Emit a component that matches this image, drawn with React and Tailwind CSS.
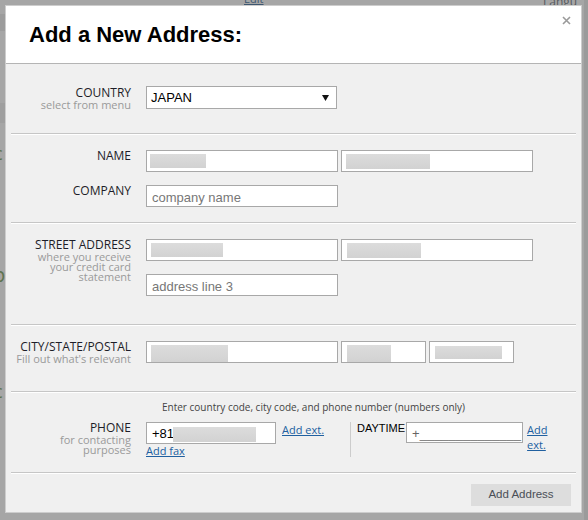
import React from "react";

const sans = "font-['Open_Sans',sans-serif]";
const arial = "font-['Liberation_Sans',Arial,sans-serif]";

function Blur({ className }) {
  return <span className={`block bg-gradient-to-b from-[#dcdcdc] to-[#d2d2d2] ${className}`} />;
}

function Field({ className = "", children }) {
  return (
    <div className={`h-[22px] bg-white border border-[#a8a8a8] flex items-center overflow-hidden ${arial} text-[13px] ${className}`}>
      {children}
    </div>
  );
}

function Label({ title, sub, nudge = "-mt-[1px]" }) {
  return (
    <div className={`w-[125px] shrink-0 text-right ${sans} ${nudge}`}>
      <div className="text-[12px] leading-[14px] text-[#1d1d28]">{title}</div>
      {sub && <div className="text-[11px] leading-[10px] text-[#9a9a9a]">{sub}</div>}
    </div>
  );
}

function Sep() {
  return <div className="mx-[5px] border-t border-[#c6c6c6] border-b border-b-white" />;
}

export default function App() {
  return (
    <div className="relative w-[588px] h-[520px] bg-[#a6a6a6] overflow-hidden">
      {/* page behind the overlay */}
      <span className={`absolute left-[244px] top-[-9px] text-[11px] underline text-[#3d5670] ${sans}`}>Edit</span>
      <span className={`absolute left-[543px] top-[-7px] text-[12px] text-[#55595e] ${sans}`}>Langu</span>
      <div className="absolute left-0 top-[14px] w-[5px] h-[17px] bg-[#9c9c9c]" />
      <div className="absolute left-0 top-[103px] w-[5px] h-[20px] bg-[#9f9f9f]" />
      <span className={`absolute left-[-6px] top-[140px] text-[18px] text-[#5f7450] ${sans}`}>c</span>
      <span className={`absolute left-[-7px] top-[260px] text-[20px] text-[#5f7450] ${sans}`}>p</span>
      <span className={`absolute left-[-6px] top-[378px] text-[18px] text-[#5f7450] ${sans}`}>c</span>
      <div className="absolute right-0 top-0 w-[4px] h-full bg-[#9b9b9b]" />

      <div className="p-[5px]">
        <div className="relative w-[577px] h-[508px] border border-[#cdcdcd] bg-[#f0f0f0] flex flex-col">
          {/* header */}
          <div className="h-[58px] shrink-0 bg-white border-b border-[#b4b4b4] flex items-center pl-[23px]">
            <h1 className={`${arial} text-[22px] font-bold text-black`}>Add a New Address:</h1>
          </div>
          <svg className="absolute right-[10px] top-[10px]" width="9" height="9" viewBox="0 0 9 9">
            <path d="M1 1L8 8M8 1L1 8" stroke="#9a9a9a" strokeWidth="1.6" />
          </svg>

          {/* country */}
          <div className="h-[69px] shrink-0 flex items-start pt-[22px]">
            <Label title="COUNTRY" sub="select from menu" nudge="mt-0" />
            <div className={`ml-[15px] w-[191px] h-[23px] bg-white border border-[#a8a8a8] flex items-center justify-between pl-[4px] pr-[7px] pt-[1px] ${arial} text-[13px] text-black`}>
              <span>JAPAN</span>
              <svg width="7" height="6" viewBox="0 0 7 6">
                <path d="M0 0H7L3.5 6Z" fill="#111" />
              </svg>
            </div>
          </div>
          <Sep />

          {/* name / company */}
          <div className="h-[87px] shrink-0 pt-[15px] flex flex-col gap-[13px]">
            <div className="flex items-start">
              <Label title="NAME" />
              <div className="ml-[15px] flex gap-[3px]">
                <Field className="w-[192px] pl-[3px]">
                  <Blur className="w-[56px] h-[14px]" />
                </Field>
                <Field className="w-[192px] pl-[4px]">
                  <Blur className="w-[84px] h-[15px]" />
                </Field>
              </div>
            </div>
            <div className="flex items-start">
              <Label title="COMPANY" />
              <Field className="ml-[15px] w-[192px] pl-[5px] pt-[3px] text-[13.5px] text-[#777]">company name</Field>
            </div>
          </div>
          <Sep />

          {/* street */}
          <div className="h-[100px] shrink-0 flex items-start pt-[15px]">
            <Label
              title="STREET ADDRESS"
              sub={
                <>
                  where you receive
                  <br />
                  your credit card
                  <br />
                  statement
                </>
              }
            />
            <div className="ml-[15px] flex flex-col gap-[13px]">
              <div className="flex gap-[3px]">
                <Field className="w-[192px] pl-[4px]">
                  <Blur className="w-[72px] h-[14px]" />
                </Field>
                <Field className="w-[192px] pl-[5px]">
                  <Blur className="w-[74px] h-[15px]" />
                </Field>
              </div>
              <Field className="w-[192px] pl-[5px] pt-[3px] text-[13.5px] text-[#777]">address line 3</Field>
            </div>
          </div>
          <Sep />

          {/* city */}
          <div className="h-[65px] shrink-0 flex items-start pt-[15px]">
            <Label title="CITY/STATE/POSTAL" sub="Fill out what's relevant" />
            <div className="ml-[15px] flex gap-[3px]">
              <Field className="w-[192px] pl-[4px] items-end">
                <Blur className="w-[77px] h-[17px]" />
              </Field>
              <Field className="w-[85px] pl-[5px] items-end">
                <Blur className="w-[44px] h-[17px]" />
              </Field>
              <Field className="w-[85px] pl-[5px]">
                <Blur className="w-[67px] h-[13px]" />
              </Field>
            </div>
          </div>
          <Sep />

          {/* phone */}
          <div className="h-[79px] shrink-0 pt-[7px]">
            <div className={`pl-[156px] text-[10px] leading-[15px] text-[#444] ${sans}`}>
              Enter country code, city code, and phone number (numbers only)
            </div>
            <div className="flex items-start mt-[7px]">
              <Label
                title="PHONE"
                sub={
                  <>
                    for contacting
                    <br />
                    purposes
                  </>
                }
              />
              <div className={`ml-[15px] w-[204px] shrink-0 ${sans} text-[11px] leading-[14px]`}>
                <div className="flex items-start">
                  <Field className="w-[130px] h-[21px] pl-[5px] pt-[2px] text-[13.5px] text-black">
                    <span>+81</span>
                    <Blur className="ml-[-1px] w-[83px] h-[15px]" />
                  </Field>
                  <a className="ml-[6px] mt-[1px] text-[#2060a0] underline">Add ext.</a>
                </div>
                <a className="block text-[#2060a0] underline">Add fax</a>
              </div>
              <div className="w-px h-[35px] bg-[#cccccc]" />
              <span className={`ml-[6px] ${arial} text-[11px] leading-[13px] text-black`}>DAYTIME</span>
              <div className={`ml-[1px] w-[117px] h-[21px] bg-white border border-[#a8a8a8] overflow-hidden whitespace-nowrap pl-[5px] pt-[3px] ${arial} text-[13px] leading-[15px]`}>
                <span className="text-[#666]">+</span>
                <span className="text-[#777]">______________</span>
              </div>
              <a className={`ml-[4px] w-[22px] ${sans} text-[11px] leading-[15px] text-[#2060a0] underline`}>
                Add ext.
              </a>
            </div>
          </div>
          <Sep />

          {/* footer */}
          <div className="flex justify-end pt-[10px] pr-[10px]">
            <button className={`w-[100px] h-[22px] bg-[#dddddd] ${arial} text-[11.5px] text-[#4a4f57]`}>
              Add Address
            </button>
          </div>
        </div>
      </div>
    </div>
  );
}
